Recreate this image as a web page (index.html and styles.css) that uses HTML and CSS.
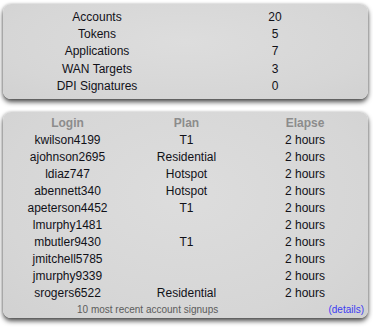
FILE: index.html
```html
<!DOCTYPE html>
<html>
<head>
<meta charset="utf-8">
<link rel="stylesheet" href="styles.css">
</head>
<body>
<div class="panel summary">
  <div class="stats">
    <span>Accounts</span><span>20</span>
    <span>Tokens</span><span>5</span>
    <span>Applications</span><span>7</span>
    <span>WAN Targets</span><span>3</span>
    <span>DPI Signatures</span><span>0</span>
  </div>
</div>
<div class="panel signups">
  <div class="grid">
    <span class="head">Login</span><span class="head">Plan</span><span class="head">Elapse</span>
    <span>kwilson4199</span><span>T1</span><span>2 hours</span>
    <span>ajohnson2695</span><span>Residential</span><span>2 hours</span>
    <span>ldiaz747</span><span>Hotspot</span><span>2 hours</span>
    <span>abennett340</span><span>Hotspot</span><span>2 hours</span>
    <span>apeterson4452</span><span>T1</span><span>2 hours</span>
    <span>lmurphy1481</span><span></span><span>2 hours</span>
    <span>mbutler9430</span><span>T1</span><span>2 hours</span>
    <span>jmitchell5785</span><span></span><span>2 hours</span>
    <span>jmurphy9339</span><span></span><span>2 hours</span>
    <span>srogers6522</span><span>Residential</span><span>2 hours</span>
  </div>
  <div class="foot">
    <span class="note">10 most recent account signups</span>
    <a class="more" href="#">(details)</a>
  </div>
</div>
</body>
</html>
```

FILE: styles.css
```css
html, body {
  margin: 0;
  padding: 0;
  background: #ffffff;
}

body {
  font-family: "Liberation Sans", Arial, sans-serif;
  font-size: 12px;
  color: #111118;
  width: 373px;
  height: 329px;
  overflow: hidden;
}

.panel {
  width: 356px;
  margin-left: 3px;
  padding: 0 4px 0 5px;
  border-radius: 8px;
  background: radial-gradient(ellipse at 50% 40%, #dddddd 0%, #d6d6d6 70%, #d1d1d1 100%);
  box-shadow: 0 3px 5px rgba(0, 0, 0, 0.7), 0 0 3px rgba(0, 0, 0, 0.18);
}

.summary {
  margin-top: 4px;
  height: 94px;
  padding-top: 0.5px;
}

.stats {
  display: grid;
  grid-template-columns: 178px 178px;
  grid-auto-rows: 17.2px;
  margin-top: 4.5px;
  text-align: center;
  line-height: 17px;
}

.signups {
  margin-top: 13px;
  height: 206px;
}

.grid {
  display: grid;
  grid-template-columns: 119px 119px 118px;
  grid-auto-rows: 17px;
  padding-top: 3px;
  text-align: center;
  line-height: 17px;
}

.head {
  font-weight: bold;
  color: #8c8c8c;
}

.foot {
  display: flex;
  align-items: center;
  height: 14px;
  margin-top: 1px;
  font-size: 10px;
}

.note {
  margin-left: 69px;
  color: #5c5c5c;
}

.more {
  margin-left: auto;
  color: #3b3bf2;
  text-decoration: none;
}
```
